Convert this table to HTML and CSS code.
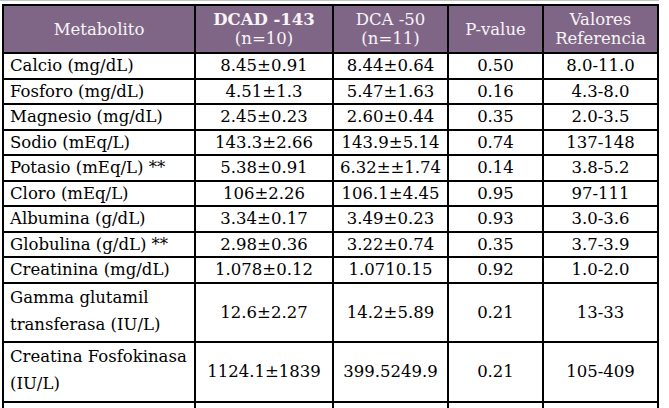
FILE: index.html
```html
<!DOCTYPE html>
<html lang="es">
<head>
<meta charset="utf-8">
<title>Metabolitos</title>
<link rel="stylesheet" href="styles.css">
</head>
<body>
<div class="topline"></div>
<div class="grid" role="table">
  <div class="h"><span>Metabolito</span></div>
  <div class="h"><span><b>DCAD -143</b><br>(n=10)</span></div>
  <div class="h"><span>DCA -50<br>(n=11)</span></div>
  <div class="h"><span>P-value</span></div>
  <div class="h"><span>Valores<br>Referencia</span></div>

  <div class="n">Calcio (mg/dL)</div><div class="v">8.45±0.91</div><div class="v">8.44±0.64</div><div class="v">0.50</div><div class="v">8.0-11.0</div>
  <div class="n">Fosforo (mg/dL)</div><div class="v">4.51±1.3</div><div class="v">5.47±1.63</div><div class="v">0.16</div><div class="v">4.3-8.0</div>
  <div class="n">Magnesio (mg/dL)</div><div class="v">2.45±0.23</div><div class="v">2.60±0.44</div><div class="v">0.35</div><div class="v">2.0-3.5</div>
  <div class="n">Sodio (mEq/L)</div><div class="v">143.3±2.66</div><div class="v">143.9±5.14</div><div class="v">0.74</div><div class="v">137-148</div>
  <div class="n">Potasio (mEq/L) **</div><div class="v">5.38±0.91</div><div class="v">6.32±±1.74</div><div class="v">0.14</div><div class="v">3.8-5.2</div>
  <div class="n">Cloro (mEq/L)</div><div class="v">106±2.26</div><div class="v">106.1±4.45</div><div class="v">0.95</div><div class="v">97-111</div>
  <div class="n">Albumina (g/dL)</div><div class="v">3.34±0.17</div><div class="v">3.49±0.23</div><div class="v">0.93</div><div class="v">3.0-3.6</div>
  <div class="n">Globulina (g/dL) **</div><div class="v">2.98±0.36</div><div class="v">3.22±0.74</div><div class="v">0.35</div><div class="v">3.7-3.9</div>
  <div class="n">Creatinina (mg/dL)</div><div class="v">1.078±0.12</div><div class="v">1.0710.15</div><div class="v">0.92</div><div class="v">1.0-2.0</div>
  <div class="n tall">Gamma glutamil transferasa (IU/L)</div><div class="v">12.6±2.27</div><div class="v">14.2±5.89</div><div class="v">0.21</div><div class="v">13-33</div>
  <div class="n tall">Creatina Fosfokinasa (IU/L)</div><div class="v">1124.1±1839</div><div class="v">399.5249.9</div><div class="v">0.21</div><div class="v">105-409</div>
  <div class="e"></div><div class="e"></div><div class="e"></div><div class="e"></div><div class="e"></div>
</div>
</body>
</html>
```

FILE: styles.css
```css
html, body {
  margin: 0;
  padding: 0;
  background: #ffffff;
  overflow: hidden;
  height: 408px;
}
body {
  font-family: "DejaVu Serif", "Liberation Serif", serif;
  font-size: 16.5px;
  color: #000;
}
.topline {
  height: 1px;
  width: 659px;
  background: #c4c4c4;
  margin-bottom: 3px;
}
.grid {
  margin-left: 2px;
  width: 657px;
  display: grid;
  grid-template-columns: 190px 136px 113px 93px 113px;
  grid-template-rows: 46px repeat(9, 23.5px) 57px 58px 20px;
  gap: 2px;
  padding: 2px 2px 0 2px;
  box-sizing: border-box;
  background: #000;
}
.grid > div {
  background: #fff;
  display: flex;
  align-items: center;
}
.grid > .h {
  background: #806686;
  color: #f7f4f7;
  justify-content: center;
  text-align: center;
  line-height: 19px;
}
.h b {
  font-weight: bold;
}
.n {
  padding-left: 6px;
  white-space: nowrap;
}
.n.tall {
  white-space: normal;
  line-height: 27px;
  align-items: flex-start;
  padding-right: 4px;
}
.v {
  justify-content: center;
}
```
